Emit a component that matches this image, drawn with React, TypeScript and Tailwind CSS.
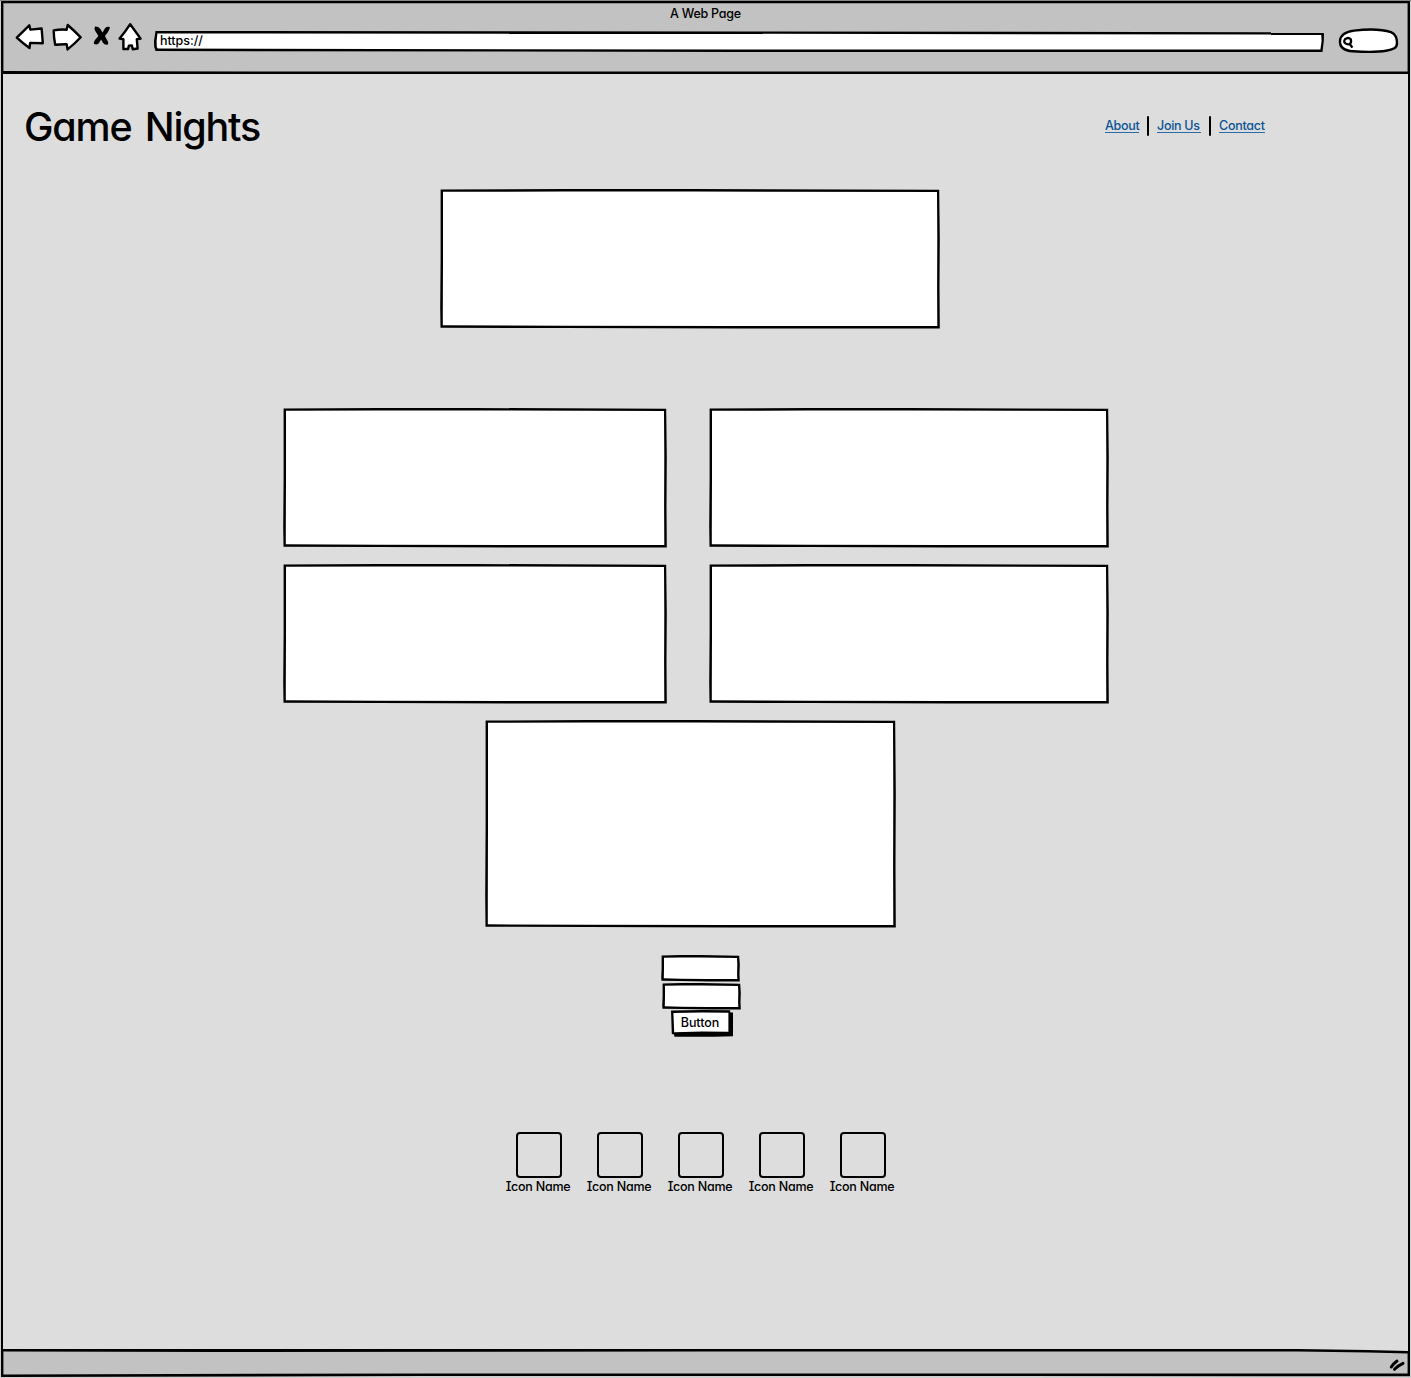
import type { ReactNode } from "react";

const FONT =
  "font-['Inter','Liberation_Sans',sans-serif] [font-feature-settings:'cv11','cv08','ss03']";

/* A panel whose ink outline wobbles slightly, as if drawn with a pen. */
function SketchBox({ className = "", children }: { className?: string; children?: ReactNode }) {
  return (
    <div className={`relative isolate ${className}`}>
      <span className="absolute inset-0 -z-10 bg-black [clip-path:polygon(0.6px_0.5px,25%_0px,50%_0px,calc(100%-0.8px)_0.7px,calc(100%-0.2px)_35%,calc(100%-0.5px)_70%,calc(100%-0.2px)_calc(100%-0.5px),60%_calc(100%-0.6px),25%_calc(100%-0.9px),0.5px_calc(100%-1.3px),0.2px_85%,0.6px_50%)]" />
      <span className="absolute inset-0 -z-10 bg-white [clip-path:polygon(3px_2.8px,25%_2.5px,50%_2.5px,calc(100%-3px)_3px,calc(100%-2.7px)_35%,calc(100%-2.9px)_70%,calc(100%-2.7px)_calc(100%-3px),60%_calc(100%-3px),25%_calc(100%-3.2px),2.8px_calc(100%-3.7px),2.8px_85%,3px_50%)]" />
      {children}
    </div>
  );
}

const ink = {
  fill: "white",
  stroke: "black",
  strokeWidth: 2.4,
  strokeLinejoin: "round" as const,
  strokeLinecap: "round" as const,
};

function BackIcon() {
  return (
    <svg className="ml-[13px] shrink-0" width="32" height="32" viewBox="14 22 32 32">
      <path {...ink} d="M16.8 37.6 L29.3 25.3 L30.3 29.6 L41.6 28.5 Q42.3 36 42.8 43.2 L30.2 42.9 L29.5 48 Q22 42.5 16.8 37.6Z" />
    </svg>
  );
}

function ForwardIcon() {
  return (
    <svg className="ml-[5px] shrink-0" width="33" height="32" viewBox="51 22 33 32">
      <path {...ink} d="M53.7 30.4 Q60 29.2 66.6 29.7 L67.7 25 Q75 31.4 80.7 37.3 Q74.5 44 67.6 49.4 L66.6 44.2 Q60.5 44.1 55.2 44.8 Q53.7 37 53.7 30.4Z" />
    </svg>
  );
}

function StopIcon() {
  return (
    <svg className="ml-[7px] shrink-0" width="22" height="32" viewBox="91 22 22 32">
      <path d="M95 26.4 Q98.4 26.2 100.1 28.7 L102.6 32.4 L105 28.2 Q107 26.2 109.8 27 Q110 29.4 108 32 L104.9 36 L108 41.8 Q109 44.2 107.2 44.8 Q104.5 45.2 102.9 42.7 L101.1 39.6 L98.8 43.2 Q96.9 45.2 94 44 Q93.2 42.3 95 40.1 L98.4 36 L95.3 31 Q94 28.3 95 26.4Z" />
    </svg>
  );
}

function HomeIcon() {
  return (
    <svg className="ml-[4px] shrink-0" width="28" height="32" viewBox="117 22 28 32">
      <path {...ink} d="M130.2 24.2 L140.6 38.6 L136.8 39.2 L137.6 48.5 L132.8 49.2 L131.8 45.4 L128.9 45.6 L128.1 49 L123.4 49 L123.4 39.2 L119.6 38.6 Q125.5 31.5 130.2 24.2Z" />
    </svg>
  );
}

function BrowserBar() {
  return (
    <header className="relative isolate h-[73px] shrink-0">
      <span className="absolute inset-0 -z-10 bg-black" />
      <span className="absolute inset-0 -z-10 bg-[#c2c2c2] [clip-path:polygon(2.4px_2.2px,calc(100%-2.4px)_2.2px,calc(100%-2.4px)_calc(100%-2.4px),20%_calc(100%-2.4px),8%_calc(100%-2.8px),2.4px_calc(100%-3px))]" />
      <div className="flex h-[21px] items-center justify-center pt-[4px] text-[12.5px] font-medium leading-4 tracking-[-0.25px]">
        A Web Page
      </div>
      <div className="flex h-8">
        <BackIcon />
        <ForwardIcon />
        <StopIcon />
        <HomeIcon />
        <div className="relative isolate ml-[9px] mt-[9px] h-[21px] w-[1170px] pl-[6px] text-[12.5px] font-medium leading-[20px] tracking-[-0.05px]">
          <span className="absolute inset-0 -z-10 bg-black [clip-path:polygon(1.5px_0px,50%_0.4px,calc(100%-1px)_1.2px,100%_3px,calc(100%-0.2px)_10px,calc(100%-1.5px)_100%,50%_100%,1.5px_calc(100%-1px),0.2px_16px,0_10px)]" />
          <span className="absolute inset-0 -z-10 bg-white [clip-path:polygon(3.4px_2.4px,50%_2.8px,calc(100%-2.8px)_3.6px,calc(100%-2.4px)_10px,calc(100%-3.6px)_calc(100%-2.5px),50%_calc(100%-2.5px),3.8px_calc(100%-3.4px),2.8px_16px,2.6px_10px)]" />
          https://
        </div>
        <svg className="ml-[13px] shrink-0" width="64" height="32" viewBox="1337 22 64 32">
          <path {...ink} d="M1340 41 C1340.3 34 1347 31.5 1354 30.6 C1366 29.2 1382 29.2 1391 32.2 C1396.5 34.5 1396.8 39 1397 43 C1397.2 48.5 1392 49.6 1386 50.7 C1377 52.3 1365 52 1353 51.3 C1344 50.6 1339.6 47 1340 41Z" />
          <path fill="none" stroke="black" strokeWidth="2.3" strokeLinecap="round" d="M1345 39.2 Q1348.3 36.7 1350.8 39.3 Q1351.8 42.6 1349.5 44.2 Q1346.2 45 1344.4 42.4 Q1343.9 40.4 1345 39.2Z M1349.8 44.1 L1351.8 46.8" />
        </svg>
      </div>
    </header>
  );
}

function NavLink({ className, children }: { className: string; children: ReactNode }) {
  return (
    <a href="#" className={`block h-[14px] whitespace-nowrap border-b border-[#2a6ba8] text-[12.5px] font-medium leading-[13px] tracking-[-0.28px] text-[#0b5394] ${className}`}>
      {children}
    </a>
  );
}

function SiteHeader() {
  return (
    <div className="flex h-[105px] items-center justify-between pl-[24px] pr-[146px]">
      <h1 className="text-[39.5px] font-medium leading-[48px] tracking-[-1.2px] [word-spacing:4px]">
        Game Nights
      </h1>
      <nav className="mb-[2px] flex items-center">
        <NavLink className="w-[34px]">About</NavLink>
        <span className="mx-2 h-5 w-0.5 rounded-full bg-black" />
        <NavLink className="w-[44px]">Join Us</NavLink>
        <span className="mx-2 h-5 w-0.5 rounded-full bg-black" />
        <NavLink className="w-[46px]">Contact</NavLink>
      </nav>
    </div>
  );
}

function SignUp() {
  return (
    <div className="ml-[661px] mt-[26px] flex flex-col items-start">
      <SketchBox className="h-[27px] w-[79px]" />
      <SketchBox className="ml-px mt-px h-[27px] w-[79px]" />
      <button className="relative isolate ml-[10px] mt-0 h-[27px] w-[62px] pb-[3px] pr-[4px] text-center text-[12.5px] font-medium leading-[23px] tracking-[-0.05px]">
        <span className="absolute inset-0 -z-10 bg-black [clip-path:polygon(0_0.5px,50%_0,calc(100%-3px)_0.3px,calc(100%-2.6px)_2.5px,100%_2.6px,100%_calc(100%-0.8px),70%_calc(100%-0.3px),3.5px_calc(100%-0.3px),3px_calc(100%-2.5px),0.8px_calc(100%-3px))]" />
        <span className="absolute inset-0 -z-10 bg-white [clip-path:polygon(2.4px_3px,50%_2.4px,calc(100%-4.6px)_2.8px,calc(100%-4.6px)_calc(100%-5.2px),50%_calc(100%-5.4px),3.2px_calc(100%-4.8px))]" />
        Button
      </button>
    </div>
  );
}

function IconRow() {
  return (
    <div className="ml-[498px] mt-[95px] flex">
      {[0, 1, 2, 3, 4].map((i) => (
        <div key={i} className="flex w-[81px] flex-col items-center">
          <div className="h-[46px] w-[46px] rounded-[4px] border-2 border-black" />
          <span className="mr-px whitespace-nowrap text-[12.5px] font-medium leading-[18px] tracking-[-0.25px]">
            Icon Name
          </span>
        </div>
      ))}
    </div>
  );
}

function StatusBar() {
  return (
    <footer className="relative isolate flex h-[28px] shrink-0 items-center justify-end pr-[4px]">
      <span className="absolute inset-0 -z-10 bg-black [clip-path:polygon(0_0,100%_0,100%_calc(100%-0.8px),30%_calc(100%-1px),0_100%)]" />
      <span className="absolute left-0 top-0 -z-10 h-[5px] w-full bg-[#dddddd] [clip-path:polygon(92%_0,calc(100%-2px)_0,calc(100%-2px)_2px,97%_1px)]" />
      <span className="absolute inset-0 -z-10 bg-[#c2c2c2] [clip-path:polygon(2.4px_2.6px,15%_3px,50%_2.6px,92%_2.6px,97%_3.4px,calc(100%-2.4px)_4.6px,calc(100%-2.4px)_calc(100%-3.4px),30%_calc(100%-3.6px),2.4px_calc(100%-2.6px))]" />
      <svg width="18" height="14" viewBox="1388 1358 18 14" className="mt-[4px]">
        <path fill="none" stroke="black" strokeWidth="3" strokeLinecap="round" d="M1391.3 1367 Q1393.5 1363.5 1397 1361 M1394.5 1369.3 Q1398.5 1365.4 1403 1363.4" />
      </svg>
    </footer>
  );
}

export default function App() {
  return (
    <div className={`h-[1378px] w-[1411px] overflow-hidden border-t border-[#848984] bg-[#d0d0d0] text-black ${FONT}`}>
      <div className="ml-px flex h-[1376px] w-[1409px] flex-col">
        <BrowserBar />
        <main className="flex grow flex-col border-x-2 border-black bg-[#dddddd]">
          <div className="-ml-[3px] flex w-[1411px] flex-col">
            <SiteHeader />
            <SketchBox className="ml-[440px] mt-[10px] h-[140px] w-[500px]" />
            <div className="ml-[283px] mt-[79px] grid grid-cols-[384px_400px] gap-x-[42px] gap-y-[16px]">
              <SketchBox className="h-[140px]" />
              <SketchBox className="h-[140px]" />
              <SketchBox className="h-[140px]" />
              <SketchBox className="h-[140px]" />
            </div>
            <SketchBox className="ml-[485px] mt-[16px] h-[208px] w-[411px]" />
            <div className="h-px" />
            <SignUp />
            <IconRow />
          </div>
        </main>
        <StatusBar />
      </div>
    </div>
  );
}
